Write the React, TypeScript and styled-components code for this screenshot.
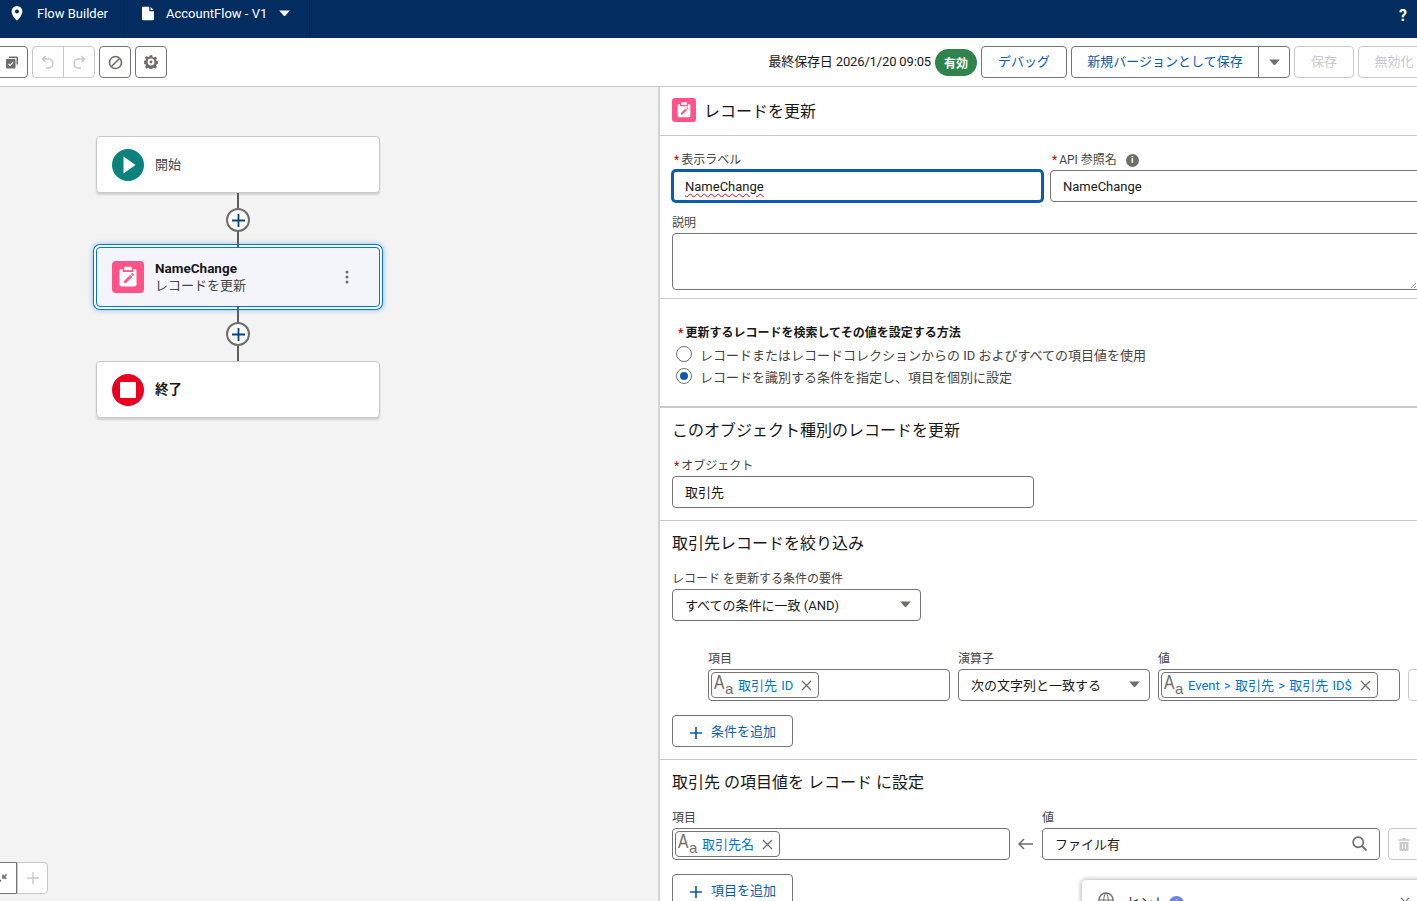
import React from "react";
import styled, { createGlobalStyle } from "styled-components";

const Global = createGlobalStyle`
  html, body { margin: 0; padding: 0; height: 100%; overflow: hidden; background: #fff; }
  body { font-family: Roboto, "Noto Sans CJK JP", sans-serif; font-size: 13px; color: #181818; }
  * { box-sizing: border-box; }
`;

const Page = styled.div`
  width: 1417px; height: 901px; overflow: hidden; display: flex; flex-direction: column;
`;
const Header = styled.header`
  height: 38px; flex: none; background: #032d60; color: #fff; display: flex; align-items: stretch;
`;
const HeaderTab = styled.div<{ $w: number; $pl: number }>`
  width: ${p => p.$w}px; padding-left: ${p => p.$pl}px; display: flex; align-items: center; gap: 12px;
  border-right: 1px solid #01244d; font-size: 13px; padding-bottom: 12px; flex: none;
`;
const HelpMark = styled.div`
  margin-left: auto; width: 18px; font-size: 16px; font-weight: 700; padding-top: 6px; flex: none;
`;
const Toolbar = styled.div`
  height: 49px; flex: none; border-bottom: 1px solid #c9c9c9; display: flex; align-items: flex-start;
  padding: 8px 0 0 0; overflow: hidden;
`;
const IconBtn = styled.div`
  width: 32px; height: 32px; flex: none; background: #fff;
  border: 1px solid #747474; border-radius: 4px;
  display: flex; align-items: center; justify-content: center;
`;
const FirstBtn = styled(IconBtn)`
  margin-left: -4px; margin-right: 4px;
`;
const UndoGroup = styled.div`
  display: flex; width: 63px; height: 32px; flex: none; border: 1px solid #c9c9c9; border-radius: 4px;
  margin-right: 4px;
`;
const UndoCell = styled.div`
  flex: 1; display: flex; align-items: center; justify-content: center;
  & + & { border-left: 1px solid #c9c9c9; }
`;
const SpacedBtn = styled(IconBtn)`
  margin-right: 4px;
`;
const SaveInfo = styled.div`
  margin-left: auto; font-size: 13px; line-height: 32px; white-space: nowrap; flex: none; margin-right: 4px; letter-spacing: -.15px;
`;
const Badge = styled.div`
  width: 42px; height: 27px; border-radius: 14px; background: #2e844a; color: #fff; font-size: 12px; font-weight: 700;
  display: flex; align-items: center; justify-content: center; flex: none; margin: 3px 4px 0 0;
`;
const TextBtn = styled.div<{ $w: number; $off?: boolean }>`
  width: ${p => p.$w}px; height: 32px; flex: none; border: 1px solid ${p => (p.$off ? "#c9c9c9" : "#747474")};
  border-radius: 4px; background: #fff; color: ${p => (p.$off ? "#c9c9c9" : "#0b5cab")};
  font-size: 13px; line-height: 30px; display: flex; align-items: flex-start; justify-content: center; margin-right: 4px; white-space: nowrap;
`;
const SplitBtn = styled.div`
  display: flex; width: 219px; height: 32px; flex: none; border: 1px solid #747474; border-radius: 4px; margin-right: 4px;
`;
const SplitMain = styled.div`
  flex: 1; color: #0b5cab; line-height: 30px; text-align: center; white-space: nowrap;
`;
const SplitArrow = styled.div`
  width: 31px; border-left: 1px solid #747474; display: flex; align-items: center; justify-content: center;
`;
const Clipped = styled.div`
  width: 59px; flex: none; overflow: visible;
`;
const Main = styled.div`
  flex: 1; display: flex; min-height: 0;
`;
const Canvas = styled.div`
  width: 660px; flex: none; background: #f3f3f3; border-right: 2px solid #d4d4d4; position: relative;
  padding: 49px 0 0 96px; display: flex; flex-direction: column; align-items: flex-start;
`;
const Node = styled.div<{ $sel?: boolean }>`
  width: 284px; height: ${p => (p.$sel ? 60 : 57)}px; background: ${p => (p.$sel ? "#f3f5fa" : "#fff")};
  border: 1px solid ${p => (p.$sel ? "#0176d3" : "#c9c9c9")}; border-radius: 4px;
  box-shadow: ${p => (p.$sel ? "0 0 0 2px #fff, 0 0 0 3px #0176d3, 0 0 4px 4px rgba(1,118,211,.3)" : "0 2px 2px rgba(0,0,0,.14)")};
  display: flex; align-items: center; padding: 0 30px 0 15px; gap: 11px; flex: none;
`;
const NodeIcon = styled.div`
  width: 32px; height: 32px; flex: none;
`;
const NodeText = styled.div`
  flex: 1; line-height: 17px; font-size: 13px; color: #444;
`;
const NodeTitle = styled.div`
  font-weight: 700; color: #181818; font-size: 13.5px;
`;
const Connector = styled.div<{ $h: number }>`
  width: 2px; height: ${p => p.$h}px; margin-left: 141px; background: #5c5c5c; position: relative; flex: none;
`;
const PlusCircle = styled.div`
  position: absolute; left: -11px; top: 15px; width: 24px; height: 24px; border-radius: 50%; background: #fff;
  border: 2px solid #706e6b; display: flex; align-items: center; justify-content: center;
`;
const ZoomBar = styled.div`
  position: absolute; left: -32px; top: 775px; display: flex; height: 32px; width: 80px;
  background: #fff; border: 1px solid #c9c9c9; border-radius: 4px;
`;
const ZoomCell = styled.div`
  flex: 1; display: flex; align-items: center; justify-content: center; border-left: 1px solid #c9c9c9;
  &:first-child { border: 1px solid #747474; margin: -1px 0 -1px -1px; flex: 0 0 49px; justify-content: flex-end; padding-right: 8px; border-radius: 4px 0 0 4px; }
`;
const Panel = styled.div`
  flex: 1; min-width: 0; position: relative; overflow: hidden; background: #fff;
`;
const PanelInner = styled.div`
  width: 785px;
`;
const PanelHead = styled.div`
  height: 49px; border-bottom: 1px solid #c9c9c9; display: flex; align-items: center; padding: 0 0 2px 12px; gap: 8px;
`;
const HeadTitle = styled.div`
  font-size: 16px; color: #181818;
`;
const Section = styled.section<{ $h: number; $thick?: boolean; $pt?: number }>`
  height: ${p => p.$h}px; padding: ${p => p.$pt ?? 0}px 0 0 12px;
  border-bottom: ${p => (p.$thick ? 2 : 1)}px solid #c9c9c9; flex: none;
`;
const Row = styled.div<{ $gap?: number; $mt?: number; $pl?: number }>`
  display: flex; gap: ${p => p.$gap ?? 8}px; margin-top: ${p => p.$mt ?? 0}px; padding-left: ${p => p.$pl ?? 0}px; align-items: flex-end;
`;
const Field = styled.div<{ $w: number; $mt?: number }>`
  width: ${p => p.$w}px; flex: none; margin-top: ${p => p.$mt ?? 0}px;
`;
const Label = styled.div`
  font-size: 12px; line-height: 14px; height: 14px; color: #444; margin-bottom: 3px; white-space: nowrap; display: flex; align-items: center;
`;
const Req = styled.span`
  color: #ba0517; margin: 0 2px 0 2px;
`;
const InfoDot = styled.span`
  width: 13px; height: 13px; margin-left: 9px; border-radius: 50%; background: #706e6b; color: #fff; font-size: 9px; font-weight: 700;
  display: inline-flex; align-items: center; justify-content: center;
`;
const Input = styled.div<{ $focus?: boolean; $pr?: number; $pb?: number }>`
  height: 32px; border: ${p => (p.$focus ? "2px solid #0b5cab" : "1px solid #747474")}; border-radius: 4px; background: #fff;
  box-shadow: ${p => (p.$focus ? "0 0 0 1px #0b5cab" : "none")};
  padding: 0 ${p => p.$pr ?? 12}px ${p => p.$pb ?? 2}px ${p => (p.$focus ? 11 : 12)}px; display: flex; align-items: center; justify-content: space-between;
  font-size: 13px; color: #181818; white-space: nowrap;
`;
const PillInput = styled.div`
  height: 32px; border: 1px solid #747474; border-radius: 4px; background: #fff; padding: 2px; display: flex; align-items: center;
`;
const Pill = styled.div`
  height: 26px; border: 1px solid #747474; border-radius: 4px; padding: 0 6px 2px 2px; display: flex; align-items: center; gap: 5px;
  color: #0176d3; font-size: 13px; white-space: nowrap; word-spacing: 1px;
  & > svg { margin-left: 3px; position: relative; top: 1px; }
`;
const TypeGlyph = styled.span`
  width: 19px; height: 20px; flex: none; display: inline-flex; align-items: flex-start; color: #706e6b; line-height: 1;
  font-family: "Liberation Sans", sans-serif; position: relative;
`;
const GlyphBig = styled.span`
  display: inline-block; font-size: 20px; width: 11px; transform: scaleX(.78); transform-origin: left top; position: relative; top: -2px;
`;
const GlyphSmall = styled.span`
  display: inline-block; font-size: 15px; position: relative; top: 7px;
`;
const Squiggle = styled.span`
  text-decoration: underline wavy #ea001e 1px; text-underline-offset: 2px;
`;
const Textarea = styled.div`
  height: 57px; border: 1px solid #747474; border-radius: 4px; position: relative; background: #fff;
`;
const ResizeGrip = styled.svg`
  position: absolute; right: 2px; bottom: 1px;
`;
const BoldLabel = styled.div`
  font-size: 12px; font-weight: 700; line-height: 14px; padding-left: 4px; color: #181818;
`;
const RadioList = styled.div`
  margin-top: 3px;
`;
const RadioRow = styled.div`
  display: flex; align-items: center; gap: 8px; height: 22px; padding-left: 4px; font-size: 13px; color: #444;
`;
const Radio = styled.span<{ $on?: boolean }>`
  width: 16px; height: 16px; border-radius: 50%; border: 1px solid #747474; background: #fff; flex: none; position: relative;
  display: flex; align-items: center; justify-content: center;
  &::after { content: ""; width: 8px; height: 8px; border-radius: 50%; background: ${p => (p.$on ? "#0b5cab" : "transparent")}; }
`;
const H2 = styled.h2`
  margin: 0; font-size: 16px; font-weight: 400; line-height: 22px; color: #181818;
`;
const AddBtn = styled.div`
  width: 121px; height: 32px; margin-top: 14px; border: 1px solid #747474; border-radius: 4px; display: flex; align-items: center;
  padding: 0 0 2px 17px; gap: 9px; color: #0b5cab; font-size: 13px; background: #fff;
  & > svg { position: relative; top: 3px; }
`;
const ArrowCell = styled.div`
  width: 32px; height: 32px; display: flex; align-items: center; justify-content: center; flex: none;
`;
const Ghost = styled.div<{ $ml?: number }>`
  width: 32px; height: 32px; flex: none; margin-left: ${p => p.$ml ?? 0}px; border: 1px solid #c9c9c9; border-radius: 4px; display: flex; align-items: center; justify-content: center; background: #fff;
`;
const Hint = styled.div`
  position: absolute; left: 422px; top: 793px; width: 400px; height: 60px; background: #fff; border-radius: 4px 0 0 0;
  box-shadow: 0 0 4px 1px rgba(0,0,0,.28); padding: 12px 0 0 16px; display: flex; align-items: flex-start; gap: 13px; font-size: 13px; color: #181818;
`;
const HintCount = styled.span`
  width: 15px; height: 15px; background: #6b82ec; border-radius: 50%; color: #fff; font-size: 10px; display: inline-flex; align-items: center; justify-content: center; margin-left: 3px;
`;
const HintClose = styled.div`
  position: absolute; left: 318px; top: 15px;
`;
const HeaderCaret = styled.span`
  display: flex;
`;
const PinLabel = styled.span`
  margin-left: 1px;
`;

const Caret = ({ c = "#706e6b", w = 11 }: { c?: string; w?: number }) => (
  <svg width={w} height={w * 0.62} viewBox="0 0 11 7"><path d="M0 .5h11L5.5 6.8z" fill={c} /></svg>
);
const Close = ({ s = 11 }: { s?: number }) => (
  <svg width={s} height={s} viewBox="0 0 11 11"><path d="M1 1l9 9M10 1l-9 9" stroke="#706e6b" strokeWidth="1.3" fill="none" /></svg>
);
const Plus = ({ c = "#014486", s = 13, w = 1.8 }: { c?: string; s?: number; w?: number }) => (
  <svg width={s} height={s} viewBox="0 0 13 13"><path d="M6.5 0v13M0 6.5h13" stroke={c} strokeWidth={w} fill="none" /></svg>
);
const ClipIcon = ({ s = 32 }: { s?: number }) => (
  <svg width={s} height={s} viewBox="0 0 32 32">
    <rect width="32" height="32" rx="4" fill="#ff538a" />
    <rect x="7.500" y="8" width="17" height="17.500" rx="2" fill="#fff" />
    <rect x="10.500" y="5" width="11" height="6" rx="1" fill="#ff538a" />
    <rect x="12" y="5.700" width="8" height="3.600" rx="1" fill="#fff" />
    <path d="M11.800 22.200l.5-2.500 5.800-5.800 2 2-5.800 5.800z" fill="#ff538a" />
    <path d="M18.900 13.100l.9-.9a.7.7 0 0 1 1 0l1 1a.7.7 0 0 1 0 1l-.9.900z" fill="#ff538a" />
  </svg>
);
const AaGlyph = () => <TypeGlyph><GlyphBig>A</GlyphBig><GlyphSmall>a</GlyphSmall></TypeGlyph>;

export default function App() {
  return (
    <Page>
      <Global />
      <Header>
        <HeaderTab $w={124} $pl={10}>
          <svg width="14" height="16" viewBox="0 0 14 16"><path fillRule="evenodd" d="M7 1a5.4 5.4 0 0 0-5.4 5.4C1.600 10 5.600 14.300 6.500 15.200a.7.7 0 0 0 1 0C8.400 14.300 12.400 10 12.400 6.400A5.400 5.400 0 0 0 7 1zm0 7.400a2 2 0 1 1 0-4 2 2 0 0 1 0 4z" fill="#fff" /></svg>
          <PinLabel>Flow Builder</PinLabel>
        </HeaderTab>
        <HeaderTab $w={186} $pl={18}>
          <svg width="12" height="15" viewBox="0 0 14 16"><path d="M1.500 0H8.500v4.500A1 1 0 0 0 9.500 5.500H14V14.500A1.500 1.500 0 0 1 12.500 16h-11A1.500 1.500 0 0 1 0 14.500v-13A1.500 1.500 0 0 1 1.500 0zM10 .3L13.700 4H10z" fill="#fff" /></svg>
          <span>AccountFlow - V1</span>
          <HeaderCaret><Caret c="#fff" /></HeaderCaret>
        </HeaderTab>
        <HelpMark>?</HelpMark>
      </Header>
      <Toolbar>
        <FirstBtn>
          <svg width="14" height="14" viewBox="0 0 14 14">
            <path d="M4 1.500h8A1 1 0 0 1 13 2.500v7h-1.500V3H4z" fill="#706e6b" />
            <rect x="1" y="4" width="9.500" height="9.500" rx="1" fill="#706e6b" />
            <path d="M3.500 8.800l1.600 1.600 3-3.200" stroke="#fff" strokeWidth="1.100" fill="none" />
          </svg>
        </FirstBtn>
        <UndoGroup>
          <UndoCell>
            <svg width="14" height="14" viewBox="0 0 14 14"><path d="M4.500 1L1.500 4l3 3M2 4h5.500a4.500 4.500 0 0 1 0 9H5" stroke="#c9c9c9" strokeWidth="1.500" fill="none" /></svg>
          </UndoCell>
          <UndoCell>
            <svg width="14" height="14" viewBox="0 0 14 14"><path d="M9.500 1l3 3-3 3M12 4H6.500a4.500 4.500 0 0 0 0 9H9" stroke="#c9c9c9" strokeWidth="1.500" fill="none" /></svg>
          </UndoCell>
        </UndoGroup>
        <SpacedBtn>
          <svg width="15" height="15" viewBox="0 0 15 15"><circle cx="7.500" cy="7.500" r="6" stroke="#706e6b" strokeWidth="1.600" fill="none" /><path d="M3.500 11.500l8-8" stroke="#706e6b" strokeWidth="1.600" /></svg>
        </SpacedBtn>
        <IconBtn>
          <svg width="14" height="14" viewBox="0 0 14 14"><path fillRule="evenodd" d="M5.800.3h2.400l.4 1.700 1.200.5 1.500-.9 1.700 1.700-.9 1.500.5 1.200 1.700.4v2.400l-1.700.4-.5 1.200.9 1.500-1.700 1.700-1.500-.9-1.200.5-.4 1.700H5.800l-.4-1.700-1.200-.5-1.500.9-1.700-1.700.9-1.500-.5-1.200-1.700-.4V5.800l1.700-.4.5-1.200-.9-1.500 1.700-1.700 1.500.9 1.200-.5zM7 3.600a3.400 3.400 0 1 0 0 6.800 3.400 3.400 0 0 0 0-6.800z" fill="#706e6b" /><circle cx="7" cy="7" r="1.400" fill="#706e6b" /></svg>
        </IconBtn>
        <SaveInfo>最終保存日 2026/1/20 09:05</SaveInfo>
        <Badge>有効</Badge>
        <TextBtn $w={86}>デバッグ</TextBtn>
        <SplitBtn>
          <SplitMain>新規バージョンとして保存</SplitMain>
          <SplitArrow><Caret /></SplitArrow>
        </SplitBtn>
        <TextBtn $w={60} $off>保存</TextBtn>
        <Clipped><TextBtn $w={72} $off>無効化</TextBtn></Clipped>
      </Toolbar>
      <Main>
        <Canvas>
          <Node>
            <NodeIcon>
              <svg width="32" height="32" viewBox="0 0 32 32"><circle cx="16" cy="16" r="16" fill="#0b827c" /><path d="M11.500 7.500L23.500 16l-12 8.500z" fill="#fff" /></svg>
            </NodeIcon>
            <NodeText>開始</NodeText>
          </Node>
          <Connector $h={54}><PlusCircle><Plus /></PlusCircle></Connector>
          <Node $sel>
            <NodeIcon><ClipIcon /></NodeIcon>
            <NodeText>
              <NodeTitle>NameChange</NodeTitle>
              レコードを更新
            </NodeText>
            <svg width="4" height="14" viewBox="0 0 4 14"><circle cx="2" cy="2" r="1.500" fill="#706e6b" /><circle cx="2" cy="7" r="1.500" fill="#706e6b" /><circle cx="2" cy="12" r="1.500" fill="#706e6b" /></svg>
          </Node>
          <Connector $h={54}><PlusCircle><Plus /></PlusCircle></Connector>
          <Node>
            <NodeIcon>
              <svg width="32" height="32" viewBox="0 0 32 32"><circle cx="16" cy="16" r="16" fill="#ea001e" /><rect x="8" y="8" width="16" height="16" rx="1" fill="#fff" /></svg>
            </NodeIcon>
            <NodeText><NodeTitle>終了</NodeTitle></NodeText>
          </Node>
          <ZoomBar>
            <ZoomCell>
              <svg width="10" height="11" viewBox="0 0 10 11"><path d="M8.500 1.500L5 5M5 1.500V5h3.500" stroke="#706e6b" strokeWidth="1.600" fill="none" /><path d="M0 10l3-3" stroke="#706e6b" strokeWidth="1.600" /></svg>
            </ZoomCell>
            <ZoomCell><Plus c="#c9c9c9" s={12} w={1.500} /></ZoomCell>
          </ZoomBar>
        </Canvas>
        <Panel>
          <PanelInner>
            <PanelHead>
              <ClipIcon s={24} />
              <HeadTitle>レコードを更新</HeadTitle>
            </PanelHead>
            <Section $h={163} $pt={17}>
              <Row $gap={7}>
                <Field $w={371}>
                  <Label><Req>*</Req>表示ラベル</Label>
                  <Input $focus $pb={0}><Squiggle>NameChange</Squiggle></Input>
                </Field>
                <Field $w={372}>
                  <Label><Req>*</Req>API 参照名<InfoDot>i</InfoDot></Label>
                  <Input $pb={0}>NameChange</Input>
                </Field>
              </Row>
              <Field $w={750} $mt={14}>
                <Label>説明</Label>
                <Textarea>
                  <ResizeGrip width="5" height="5" viewBox="0 0 5 5" style={{ right: 5 }}><path d="M0 5l5-5M3 5l2-2" stroke="#747474" strokeWidth=".8" /></ResizeGrip>
                </Textarea>
              </Field>
            </Section>
            <Section $h={109} $thick $pt={27}>
              <BoldLabel><Req>*</Req>更新するレコードを検索してその値を設定する方法</BoldLabel>
              <RadioList>
                <RadioRow><Radio />レコードまたはレコードコレクションからの ID およびすべての項目値を使用</RadioRow>
                <RadioRow><Radio $on />レコードを識別する条件を指定し、項目を個別に設定</RadioRow>
              </RadioList>
            </Section>
            <Section $h={113} $pt={12}>
              <H2>このオブジェクト種別のレコードを更新</H2>
              <Field $w={362} $mt={17}>
                <Label><Req>*</Req>オブジェクト</Label>
                <Input>取引先</Input>
              </Field>
            </Section>
            <Section $h={239} $pt={12}>
              <H2>取引先レコードを絞り込み</H2>
              <Field $w={249} $mt={17}>
                <Label>レコード を更新する条件の要件</Label>
                <Input $pr={9}>すべての条件に一致 (AND)<Caret /></Input>
              </Field>
              <Row $pl={36} $mt={31}>
                <Field $w={242}>
                  <Label>項目</Label>
                  <PillInput><Pill><AaGlyph />取引先 ID<Close /></Pill></PillInput>
                </Field>
                <Field $w={192}>
                  <Label>演算子</Label>
                  <Input $pr={9}>次の文字列と一致する<Caret /></Input>
                </Field>
                <Field $w={242}>
                  <Label>値</Label>
                  <PillInput><Pill><AaGlyph />Event &gt; 取引先 &gt; 取引先 ID$<Close /></Pill></PillInput>
                </Field>
                <Ghost />
              </Row>
              <AddBtn><Plus c="#0b5cab" s={12} />条件を追加</AddBtn>
            </Section>
            <Section $h={150} $pt={12}>
              <H2>取引先 の項目値を レコード に設定</H2>
              <Row $gap={0} $mt={17}>
                <Field $w={338}>
                  <Label>項目</Label>
                  <PillInput><Pill><AaGlyph />取引先名<Close /></Pill></PillInput>
                </Field>
                <ArrowCell>
                  <svg width="16" height="12" viewBox="0 0 16 12"><path d="M6 1L1 6l5 5M1.500 6H15" stroke="#706e6b" strokeWidth="1.500" fill="none" /></svg>
                </ArrowCell>
                <Field $w={338}>
                  <Label>値</Label>
                  <Input>
                    ファイル有
                    <svg width="15" height="15" viewBox="0 0 14 14"><circle cx="5.800" cy="5.800" r="4.800" stroke="#706e6b" strokeWidth="1.500" fill="none" /><path d="M9.300 9.300L13.500 13.500" stroke="#706e6b" strokeWidth="1.800" /></svg>
                  </Input>
                </Field>
                <Ghost $ml={8}>
                  <svg width="12" height="13" viewBox="0 0 12 13"><path fillRule="evenodd" d="M4.500 0h3v1.200H11.500v1.600H.5V1.200h4zM1.500 4h9v8a1 1 0 0 1-1 1h-7a1 1 0 0 1-1-1zM4 6v5h1V6zm3 0v5h1V6z" fill="#c9c9c9" /></svg>
                </Ghost>
              </Row>
              <AddBtn><Plus c="#0b5cab" s={12} />項目を追加</AddBtn>
            </Section>
          </PanelInner>
          <Hint>
            <svg width="16" height="16" viewBox="0 0 16 16"><circle cx="8" cy="8" r="7" stroke="#706e6b" strokeWidth="1.500" fill="none" /><path d="M1 8h14M8 1c-3 3-3 11 0 14M8 1c3 3 3 11 0 14" stroke="#706e6b" fill="none" /></svg>
            <span>ヒント<HintCount>i</HintCount></span>
            <HintClose><Close s={10} /></HintClose>
          </Hint>
        </Panel>
      </Main>
    </Page>
  );
}
